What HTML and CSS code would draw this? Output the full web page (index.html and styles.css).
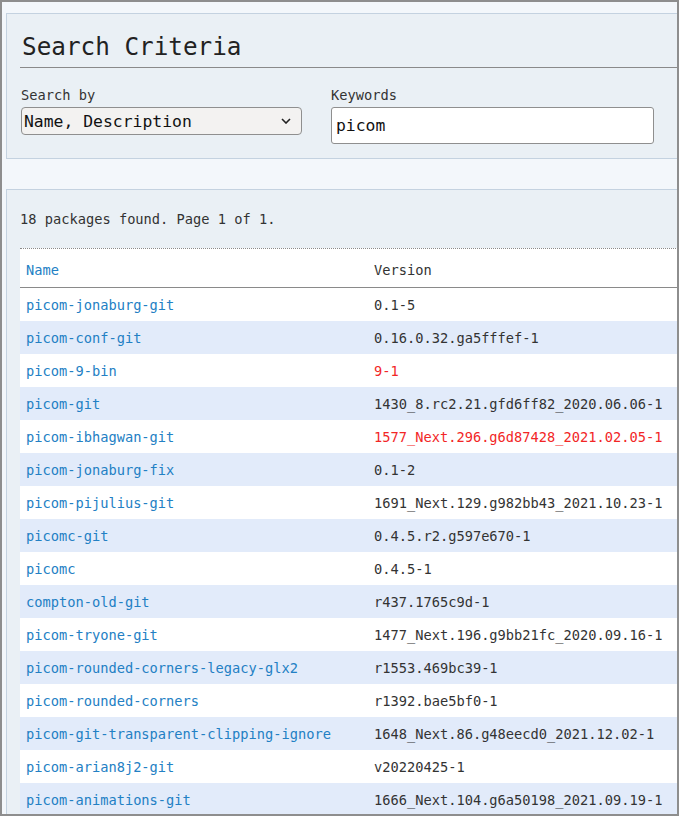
FILE: index.html
```html
<!DOCTYPE html>
<html>
<head>
<meta charset="utf-8">
<title>AUR Search</title>
<link rel="stylesheet" href="styles.css">
</head>
<body>
<div class="frame">
  <form class="box search-box">
    <h2 class="box-title">Search Criteria</h2>
    <div class="fields">
      <div class="field">
        <label class="field-label">Search by</label>
        <div class="select-wrap">
          <select class="select">
            <option>Name, Description</option>
          </select>
          <svg class="chevron" width="10" height="6" viewBox="0 0 10 6"><path d="M1 1 L5 5 L9 1" fill="none" stroke="#222" stroke-width="1.6"/></svg>
        </div>
      </div>
      <div class="field">
        <label class="field-label">Keywords</label>
        <input class="input" type="text" value="picom">
      </div>
    </div>
  </form>

  <div class="box results-box">
    <p class="count">18 packages found. Page 1 of 1.</p>
    <table class="results">
      <thead>
        <tr><th class="col-name"><a href="#">Name</a></th><th>Version</th></tr>
      </thead>
      <tbody>
        <tr><td><a href="#">picom-jonaburg-git</a></td><td>0.1-5</td></tr>
        <tr><td><a href="#">picom-conf-git</a></td><td>0.16.0.32.ga5fffef-1</td></tr>
        <tr><td><a href="#">picom-9-bin</a></td><td class="flagged">9-1</td></tr>
        <tr><td><a href="#">picom-git</a></td><td>1430_8.rc2.21.gfd6ff82_2020.06.06-1</td></tr>
        <tr><td><a href="#">picom-ibhagwan-git</a></td><td class="flagged">1577_Next.296.g6d87428_2021.02.05-1</td></tr>
        <tr><td><a href="#">picom-jonaburg-fix</a></td><td>0.1-2</td></tr>
        <tr><td><a href="#">picom-pijulius-git</a></td><td>1691_Next.129.g982bb43_2021.10.23-1</td></tr>
        <tr><td><a href="#">picomc-git</a></td><td>0.4.5.r2.g597e670-1</td></tr>
        <tr><td><a href="#">picomc</a></td><td>0.4.5-1</td></tr>
        <tr><td><a href="#">compton-old-git</a></td><td>r437.1765c9d-1</td></tr>
        <tr><td><a href="#">picom-tryone-git</a></td><td>1477_Next.196.g9bb21fc_2020.09.16-1</td></tr>
        <tr><td><a href="#">picom-rounded-corners-legacy-glx2</a></td><td>r1553.469bc39-1</td></tr>
        <tr><td><a href="#">picom-rounded-corners</a></td><td>r1392.bae5bf0-1</td></tr>
        <tr><td><a href="#">picom-git-transparent-clipping-ignore</a></td><td>1648_Next.86.g48eecd0_2021.12.02-1</td></tr>
        <tr><td><a href="#">picom-arian8j2-git</a></td><td>v20220425-1</td></tr>
        <tr><td><a href="#">picom-animations-git</a></td><td>1666_Next.104.g6a50198_2021.09.19-1</td></tr>
      </tbody>
    </table>
  </div>
</div>
</body>
</html>
```

FILE: styles.css
```css
html, body {
  margin: 0;
  padding: 0;
}

body {
  font-family: "DejaVu Sans Mono", "Liberation Mono", monospace;
  font-size: 13.7px;
  line-height: 16px;
  color: #333;
  background: #f3f7fb;
}

.frame {
  box-sizing: border-box;
  width: 679px;
  height: 816px;
  border: 2px solid #8e8e8e;
  background: #f3f7fb;
  overflow: hidden;
}

.box {
  width: 720px;
  margin-left: 4px;
  border: 1px solid #c4d2e0;
  background: #eaf0f5;
}

.search-box {
  margin-top: 11px;
  padding: 19px 0 14px 14px;
}

.box-title {
  margin: 0 0 0 -1px;
  font-size: 24.3px;
  font-weight: normal;
  line-height: 28px;
  padding: 0 0 6px 2px;
  border-bottom: 1px solid #8a8a8a;
  color: #222;
}

.fields {
  display: flex;
  gap: 29px;
  margin-top: 19px;
  align-items: flex-start;
}

.field {
  display: flex;
  flex-direction: column;
}

.field-label {
  margin-bottom: 4px;
  color: #333;
}

.select-wrap {
  position: relative;
  width: 281px;
  height: 28px;
}

.select {
  -webkit-appearance: none;
  appearance: none;
  box-sizing: border-box;
  width: 100%;
  height: 28px;
  margin: 0;
  padding: 0 0 0 2px;
  border: 1px solid #8f8f8f;
  border-radius: 4px;
  background: #f3f2f1;
  font-family: inherit;
  font-size: 16.4px;
  color: #111;
}

.chevron {
  position: absolute;
  right: 11px;
  top: 11px;
}

.input {
  box-sizing: border-box;
  width: 323px;
  height: 37px;
  margin: 0;
  padding: 0 4px;
  border: 1px solid #8f8f8f;
  border-radius: 3px;
  background: #fff;
  font-family: inherit;
  font-size: 16.4px;
  color: #111;
}

.results-box {
  margin-top: 30px;
  padding: 21px 0 0 13px;
  height: 800px;
}

.count {
  margin: 0;
}

.results {
  margin-top: 21px;
  width: 720px;
  border-collapse: separate;
  border-spacing: 0;
  border-top: 1px dotted #8a8a8a;
  background: #fff;
}

.results th {
  box-sizing: border-box;
  height: 39px;
  padding: 4px 6px 0;
  text-align: left;
  font-weight: normal;
  border-bottom: 1px solid #8a8a8a;
  vertical-align: middle;
  color: #333;
}

.results th.col-name {
  width: 348px;
}

.results td {
  height: 33px;
  padding: 0 6px;
  vertical-align: middle;
  white-space: nowrap;
}

.results tbody tr:nth-child(even) {
  background: #e2ebfa;
}

.results a {
  color: #2380c4;
  text-decoration: none;
}

.results .flagged {
  color: #f22626;
}
```
